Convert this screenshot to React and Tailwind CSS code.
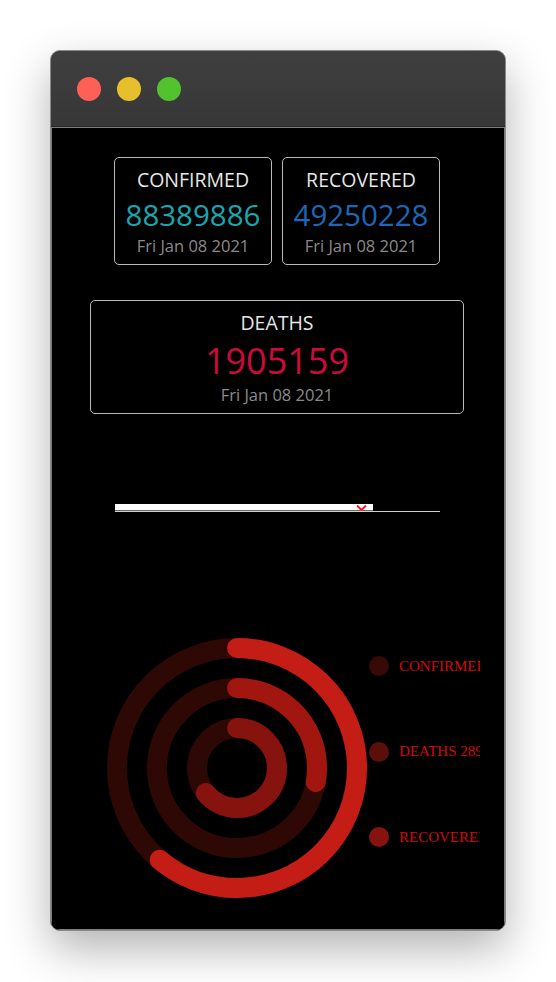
import React from "react";

const font = { fontFamily: '"Open Sans", "Noto Sans", sans-serif' };

const StatCard = ({ title, value, color, wide }) => (
	<div
		className={`flex flex-col items-center rounded-[5px] border border-[#b9b9b9] pt-[10px] pb-[6px] ${
			wide ? "w-[374px]" : "w-[158px]"
		}`}
	>
		<div className="h-[24px] text-[19.5px] leading-[24px] text-[#e6e6e6]">{title}</div>
		<div
			className={`mt-[5px] ${
				wide ? "h-[42px] text-[36px] leading-[42px]" : "h-[36px] text-[29.5px] leading-[36px]"
			} ${color}`}
		>
			{value}
		</div>
		<div className="mt-[1px] h-[24px] text-[16.5px] leading-[24px] text-[#8a8a8a]">
			Fri Jan 08 2021
		</div>
	</div>
);

// rings: radius, progress in degrees, colour
const rings = [
	{ r: 120, deg: 220, color: "#c41d15" },
	{ r: 80, deg: 100, color: "#a1170f" },
	{ r: 40, deg: 231, color: "#86130d" },
];

const legend = [
	{ label: "CONFIRMED", color: "bg-[#380a07]" },
	{ label: "DEATHS 2896", color: "bg-[#5a0f0b]" },
	{ label: "RECOVERED", color: "bg-[#86130d]" },
];

const RadialChart = () => (
	<svg width="260" height="260" viewBox="0 0 260 260">
		{rings.map((ring) => {
			const c = 2 * Math.PI * ring.r;
			const len = (c * ring.deg) / 360;
			return (
				<g key={ring.r} transform="rotate(-90 130 130)">
					<circle cx="130" cy="130" r={ring.r} fill="none" stroke="#2d0805" strokeWidth="20" />
					<circle
						cx="130"
						cy="130"
						r={ring.r}
						fill="none"
						stroke={ring.color}
						strokeWidth="20"
						strokeLinecap="round"
						strokeDasharray={`${len} ${c}`}
					/>
				</g>
			);
		})}
	</svg>
);

export default function App() {
	return (
		<div className="min-h-[982px] w-full bg-white pt-[50px] pl-[50px]" style={font}>
			<div className="flex h-[881px] w-[456px] flex-col overflow-hidden rounded-[10px] border border-[#8a8a8a] bg-[#3b3b3b] shadow-[0_18px_45px_rgba(0,0,0,0.3)]">
				{/* title bar */}
				<div className="flex h-[76px] shrink-0 items-start gap-[16px] border-b border-[#262626] bg-gradient-to-b from-[#3f3f3f] to-[#373737] pt-[26px] pl-[26px]">
					<div className="h-[24px] w-[24px] rounded-full bg-[#fe5f57]" />
					<div className="h-[24px] w-[24px] rounded-full bg-[#e6bf2d]" />
					<div className="h-[24px] w-[24px] rounded-full bg-[#52c22f]" />
				</div>

				{/* content */}
				<div className="flex flex-1 flex-col items-center border border-[#7c7c7c] bg-black pt-[29px] pr-[2px]">
					<div className="flex gap-[10px]">
						<StatCard title="CONFIRMED" value="88389886" color="text-[#17a7b0]" />
						<StatCard title="RECOVERED" value="49250228" color="text-[#1d67b8]" />
					</div>

					<div className="mt-[35px]">
						<StatCard title="DEATHS" value="1905159" color="text-[#cc0a3c]" wide />
					</div>

					{/* country select */}
					<div className="mt-[90px] flex w-[325px] flex-col">
						<div className="relative h-[7px] w-[258px] border-b border-[#6a6a6a] bg-white">
							<svg
								className="absolute right-[6px] top-[1px]"
								width="11"
								height="6"
								viewBox="0 0 11 6"
							>
								<path d="M1 0.5 L5.5 5 L10 0.5" fill="none" stroke="#ff1a1a" strokeWidth="2" />
							</svg>
						</div>
						<div className="h-px w-full bg-[#d0d0d0]" />
					</div>

					{/* chart */}
					<div className="mt-[126px] flex self-start pl-[55px]">
						<RadialChart />
						<div className="ml-[2px] flex w-[111px] flex-col gap-[65.5px] overflow-hidden pt-[18px]">
							{legend.map((item) => (
								<div key={item.label} className="flex h-[20px] items-center gap-[10px]">
									<div className={`h-[20px] w-[20px] shrink-0 rounded-full ${item.color}`} />
									<span
										className="whitespace-nowrap text-[15px] text-[#d10a0a]"
										style={{ fontFamily: '"Liberation Serif", serif' }}
									>
										{item.label}
									</span>
								</div>
							))}
						</div>
					</div>
				</div>
			</div>
		</div>
	);
}
